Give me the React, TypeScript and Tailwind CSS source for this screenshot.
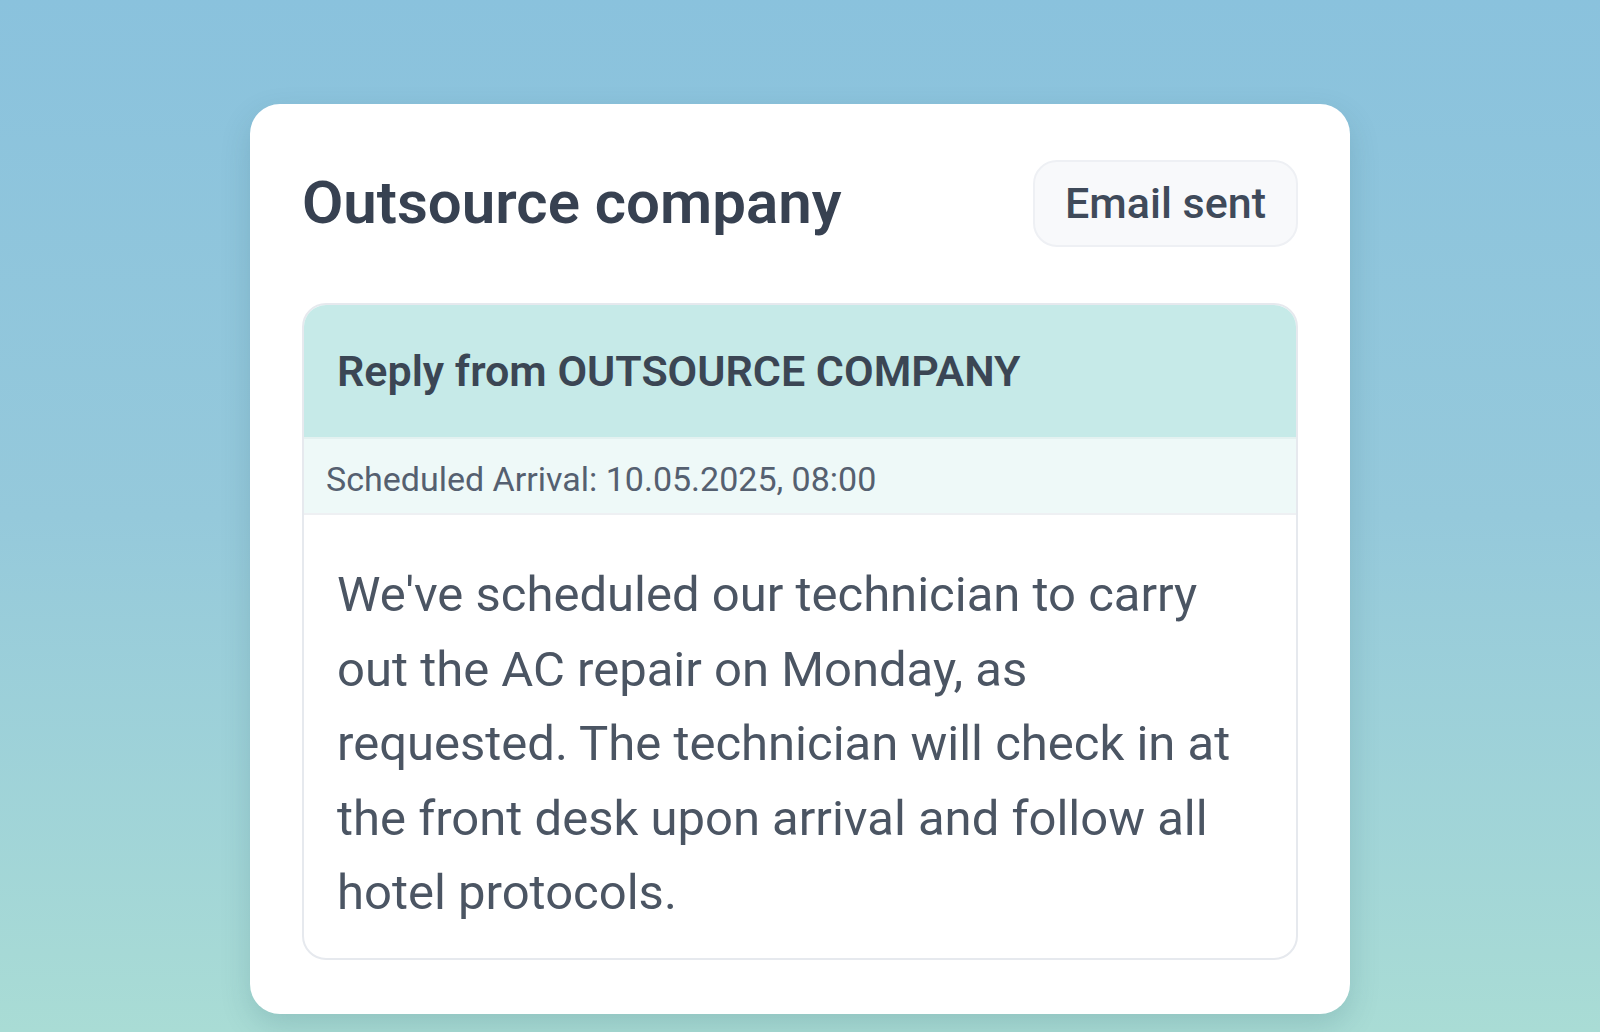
import React from 'react';

const reply = {
  vendor: 'OUTSOURCE COMPANY',
  arrival: '10.05.2025, 08:00',
  message:
    "We've scheduled our technician to carry out the AC repair on Monday, as requested. The technician will check in at the front desk upon arrival and follow all hotel protocols.",
};

function StatusBadge({ label }: { label: string }) {
  return (
    <span className="flex h-[87px] items-center rounded-[24px] border-2 border-[#eef0f4] bg-[#f8f9fb] px-[30px] text-[43px] font-medium text-[#3f4a5a]">
      {label}
    </span>
  );
}

function ReplyBox() {
  return (
    <div className="overflow-hidden rounded-[24px] border-2 border-[#e6e9ee] bg-white">
      <div className="flex h-[132px] items-center bg-[#c6eae8] px-[33px] text-[43px] font-semibold text-[#3b4654]">
        Reply from {reply.vendor}
      </div>
      <div className="flex h-[76px] items-center border-t-2 border-[#e3f1f0] bg-[#eef9f8] px-[22px] pt-[6px] text-[34px] text-[#556070]">
        Scheduled Arrival: {reply.arrival}
      </div>
      <p className="border-t-2 border-[#eef0f3] px-[33px] pb-[27px] pt-[43px] text-[49px] leading-[74.5px] text-[#4b5563]">
        {reply.message}
      </p>
    </div>
  );
}

export default function App() {
  return (
    <div
      className="min-h-[1032px] bg-gradient-to-b from-[#8ac2dd] via-[#95c9db] to-[#a9dcd5] pt-[104px] pl-[250px]"
      style={{ fontFamily: 'Roboto, "Noto Sans", sans-serif' }}
    >
      <div className="w-[1100px] rounded-[30px] bg-white px-[52px] pt-[54px] pb-[54px] shadow-[0_12px_30px_rgba(40,90,100,0.18)]">
        <div className="mb-[55px] flex items-center justify-between">
          <h2 className="text-[60px] font-semibold text-[#374151]">Outsource company</h2>
          <StatusBadge label="Email sent" />
        </div>
        <ReplyBox />
      </div>
    </div>
  );
}
